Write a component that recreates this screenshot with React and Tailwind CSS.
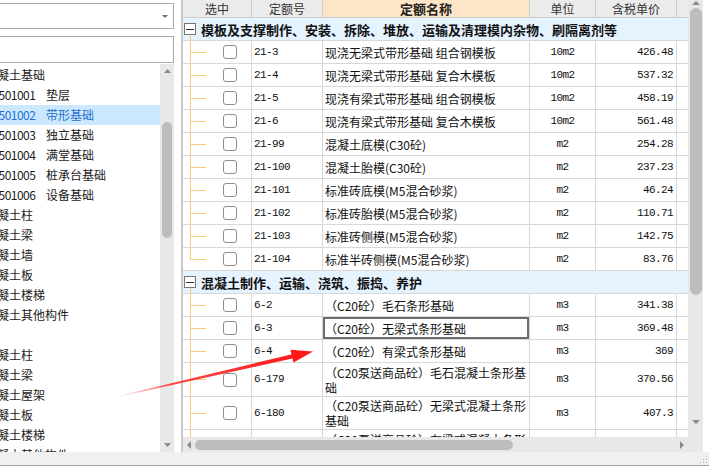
import React from 'react';

function Tri({ dir, w = 7, h = 4, color = '#8a8a8a' }) {
  let pts;
  if (dir === 'up') pts = `0,${h} ${w / 2},0 ${w},${h}`;
  else if (dir === 'down') pts = `0,0 ${w},0 ${w / 2},${h}`;
  else if (dir === 'left') pts = `${w},0 ${w},${h} 0,${h / 2}`;
  else pts = `0,0 0,${h} ${w},${h / 2}`;
  return (
    <svg width={w} height={h} viewBox={`0 0 ${w} ${h}`} className="block">
      <polygon points={pts} fill={color} />
    </svg>
  );
}

const leftItems = [
  { cat: '混凝土基础' },
  { code: '010501001', name: '垫层' },
  { code: '010501002', name: '带形基础', sel: true },
  { code: '010501003', name: '独立基础' },
  { code: '010501004', name: '满堂基础' },
  { code: '010501005', name: '桩承台基础' },
  { code: '010501006', name: '设备基础' },
  { cat: '混凝土柱' },
  { cat: '混凝土梁' },
  { cat: '混凝土墙' },
  { cat: '混凝土板' },
  { cat: '混凝土楼梯' },
  { cat: '混凝土其他构件' },
  { cat: '' },
  { cat: '混凝土柱' },
  { cat: '混凝土梁' },
  { cat: '混凝土屋架' },
  { cat: '混凝土板' },
  { cat: '混凝土楼梯' },
  { cat: '混凝土其他构件' },
];

const groupA = [
  ['21-3', '现浇无梁式带形基础 组合钢模板', '10m2', '426.48'],
  ['21-4', '现浇无梁式带形基础 复合木模板', '10m2', '537.32'],
  ['21-5', '现浇有梁式带形基础 组合钢模板', '10m2', '458.19'],
  ['21-6', '现浇有梁式带形基础 复合木模板', '10m2', '561.48'],
  ['21-99', '混凝土底模(C30砼)', 'm2', '254.28'],
  ['21-100', '混凝土胎模(C30砼)', 'm2', '237.23'],
  ['21-101', '标准砖底模(M5混合砂浆)', 'm2', '46.24'],
  ['21-102', '标准砖胎模(M5混合砂浆)', 'm2', '110.71'],
  ['21-103', '标准砖侧模(M5混合砂浆)', 'm2', '142.75'],
  ['21-104', '标准半砖侧模(M5混合砂浆)', 'm2', '83.76'],
];

const MONO = "font-['Liberation_Mono',monospace] text-[11px] tracking-[-0.6px]";

function TreeCell({ last }) {
  return (
    <div className="w-[69px] shrink-0 flex border-r border-[#d8d8d8]">
      <div className="w-[7px] shrink-0" />
      <div className="w-[16px] shrink-0 flex flex-col">
        <div className="flex-1 border-l border-b border-[#fbc87c]" />
        <div className={last ? 'flex-1' : 'flex-1 border-l border-[#fbc87c]'} />
      </div>
      <div className="ml-[17px] self-center w-[14px] h-[14px] rounded-[3px] border border-[#8e8e8e] bg-white" />
    </div>
  );
}

function GroupRow({ text }) {
  return (
    <div className="h-[23px] shrink-0 flex items-center bg-[#e5f3ff] border-b border-[#d8d8d8] relative">
      <div className="ml-[1px] w-[12px] h-[12px] border border-[#767676] bg-white flex items-center justify-center">
        <div className="w-[8px] h-px bg-[#333]" />
      </div>
      <span className="ml-[5px] font-bold text-[13px] whitespace-nowrap text-[#111] leading-none">{text}</span>
      <span className="absolute left-[7px] bottom-0 h-[5px] w-px bg-[#fbc87c]" />
    </div>
  );
}

function DataRow({ code, name, unit, price, last, h = 'h-[23px]', focus }) {
  return (
    <div className={`${h} shrink-0 flex border-b border-[#d8d8d8] text-[#111]`}>
      <TreeCell last={last} />
      <div className={`w-[71px] shrink-0 border-r border-[#d8d8d8] flex items-center pl-[2px] ${MONO}`}>{code}</div>
      <div
        className={
          focus
            ? 'w-[207px] shrink-0 border-r border-[#d8d8d8] flex items-center pl-[2px] whitespace-nowrap overflow-hidden leading-[15px] shadow-[inset_0_0_0_2px_#6e6e6e]'
            : 'w-[207px] shrink-0 border-r border-[#d8d8d8] flex items-center pl-[2px] whitespace-nowrap overflow-hidden leading-[15px]'
        }
      >
        <div>{name}</div>
      </div>
      <div className={`w-[66px] shrink-0 border-r border-[#d8d8d8] flex items-center justify-center ${MONO}`}>{unit}</div>
      <div className={`w-[81px] shrink-0 border-r border-[#d8d8d8] flex items-center justify-end pr-[3px] ${MONO}`}>{price}</div>
      <div className="w-[11px] shrink-0" />
    </div>
  );
}

export default function App() {
  return (
    <div className="w-[709px] h-[467px] bg-white flex flex-col overflow-hidden relative font-['Noto_Sans_CJK_SC',sans-serif] text-[12px] text-[#1a1a1a]">
      <div className="flex h-[452px]">
        {/* left panel */}
        <div className="w-[174px] shrink-0 flex flex-col">
          <div className="mt-[3px] h-[26px] border border-l-0 border-[#a8a8a8] flex items-center justify-end pr-[5px]">
            <Tri dir="down" w={6} h={3} color="#707070" />
          </div>
          <div className="mt-[7px] h-[27px] border border-l-0 border-[#a8a8a8]" />
          <div className="mt-[1px] flex-1 flex min-h-0">
            <div className="flex-1 overflow-hidden pt-[1px]">
              {leftItems.map((it, i) => (
                <div
                  key={i}
                  className={
                    it.sel
                      ? 'h-[20px] flex items-center whitespace-nowrap bg-[#cce8ff] text-[#1f6fd0]'
                      : 'h-[20px] flex items-center whitespace-nowrap'
                  }
                >
                  {it.cat !== undefined ? (
                    <span className="-ml-[15px]">{it.cat}</span>
                  ) : (
                    <>
                      <span className="-ml-[20px] inline-block w-[66px] tracking-[-0.5px]">{it.code}</span>
                      <span>{it.name}</span>
                    </>
                  )}
                </div>
              ))}
            </div>
            <div className="w-[14px] shrink-0 bg-[#e8e8e8] flex flex-col items-center">
              <div className="h-[14px] flex items-center justify-center">
                <Tri dir="up" />
              </div>
              <div className="h-[44px]" />
              <div className="w-[10px] h-[116px] rounded-full bg-[#bdbdbd]" />
              <div className="flex-1" />
              <div className="h-[14px] flex items-center justify-center">
                <Tri dir="down" />
              </div>
            </div>
          </div>
        </div>

        <div className="w-[7px] shrink-0" />

        {/* grid */}
        <div className="w-[522px] shrink-0 border-l-2 border-[#c9c9c9] flex flex-col">
          <div className="flex h-[437px]">
            <div className="w-[505px] shrink-0 overflow-hidden flex flex-col">
              <div className="h-[18px] shrink-0 flex bg-[#ebebeb] border-b border-[#cdcdcd] text-[#333]">
                <div className="w-[69px] shrink-0 border-r border-[#cdcdcd] flex items-center justify-center">选中</div>
                <div className="w-[71px] shrink-0 border-r border-[#cdcdcd] flex items-center justify-center">定额号</div>
                <div className="w-[207px] shrink-0 border-r border-[#cdcdcd] flex items-center justify-center bg-[#fde5c6] font-bold text-[13px] text-[#222]">定额名称</div>
                <div className="w-[66px] shrink-0 border-r border-[#cdcdcd] flex items-center justify-center">单位</div>
                <div className="w-[81px] shrink-0 border-r border-[#cdcdcd] flex items-center justify-center">含税单价</div>
                <div className="w-[11px] shrink-0" />
              </div>

              <GroupRow text="模板及支撑制作、安装、拆除、堆放、运输及清理模内杂物、刷隔离剂等" />
              {groupA.map((r, i) => (
                <DataRow key={r[0]} code={r[0]} name={r[1]} unit={r[2]} price={r[3]} last={i === groupA.length - 1} />
              ))}

              <GroupRow text="混凝土制作、运输、浇筑、振捣、养护" />
              <DataRow code="6-2" name="（C20砼）毛石条形基础" unit="m3" price="341.38" />
              <DataRow code="6-3" name="（C20砼）无梁式条形基础" unit="m3" price="369.48" focus />
              <DataRow code="6-4" name="（C20砼）有梁式条形基础" unit="m3" price="369" />
              <DataRow
                code="6-179"
                h="h-[34px]"
                name={<>（C20泵送商品砼）毛石混凝土条形基<br />础</>}
                unit="m3"
                price="370.56"
              />
              <DataRow
                code="6-180"
                h="h-[33px]"
                name={<>（C20泵送商品砼）无梁式混凝土条形<br />基础</>}
                unit="m3"
                price="407.3"
              />
              <DataRow
                code="6-181"
                h="h-[34px]"
                name={<>（C20泵送商品砼）有梁式混凝土条形<br />基础</>}
                unit="m3"
                price="387.36"
              />
            </div>
            <div className="w-[15px] shrink-0 bg-[#e8e8e8] flex flex-col items-center">
              <div className="h-[8px] flex items-start justify-center pt-[1px]">
                <Tri dir="up" w={8} h={4} />
              </div>
              <div className="w-[12px] h-[287px] rounded-full bg-[#bdbdbd]" />
              <div className="flex-1" />
              <div className="h-[16px] flex items-center justify-center">
                <Tri dir="down" w={8} h={4} />
              </div>
              <div className="h-[7px]" />
            </div>
          </div>
          <div className="h-[15px] flex bg-[#e8e8e8]">
            <div className="w-[505px] shrink-0 flex items-center">
              <div className="w-[12px] flex items-center justify-center">
                <Tri dir="left" w={4} h={8} />
              </div>
              <div className="w-[318px] h-[10px] rounded-full bg-[#bdbdbd]" />
              <div className="flex-1" />
              <div className="w-[12px] flex items-center justify-center">
                <Tri dir="right" w={4} h={8} />
              </div>
            </div>
            <div className="w-[15px] shrink-0" />
          </div>
        </div>
        <div className="flex-1" />
      </div>

      {/* status bar */}
      <div className="h-[13px] shrink-0 bg-[#f0f0f0] flex justify-end items-end">
        <svg width="9" height="9" viewBox="0 0 9 9" className="block mr-[1px] mb-[1px]">
          <rect x="7" y="1" width="1" height="1" fill="#aaa" />
          <rect x="4" y="4" width="1" height="1" fill="#aaa" />
          <rect x="7" y="4" width="1" height="1" fill="#aaa" />
          <rect x="1" y="7" width="1" height="1" fill="#aaa" />
          <rect x="4" y="7" width="1" height="1" fill="#aaa" />
          <rect x="7" y="7" width="1" height="1" fill="#aaa" />
        </svg>
      </div>
      <div className="h-px shrink-0 bg-[#a0a0a0]" />
      <div className="flex-1 bg-white" />

      {/* red annotation arrow */}
      <svg className="absolute left-0 top-0 pointer-events-none" width="709" height="467" viewBox="0 0 709 467">
        <defs>
          <linearGradient id="ag" x1="120" y1="396" x2="294" y2="356" gradientUnits="userSpaceOnUse">
            <stop offset="0" stopColor="#ff4040" stopOpacity="0.05" />
            <stop offset="0.3" stopColor="#ff2a2a" stopOpacity="0.85" />
            <stop offset="1" stopColor="#ff1a1a" stopOpacity="1" />
          </linearGradient>
        </defs>
        <polygon points="119.9,395.6 293.4,353.9 294.6,358.1 120.1,396.4" fill="url(#ag)" />
        <polygon points="313,351.5 290.4,349.8 293.6,362.6" fill="#ff1a1a" />
      </svg>
    </div>
  );
}
